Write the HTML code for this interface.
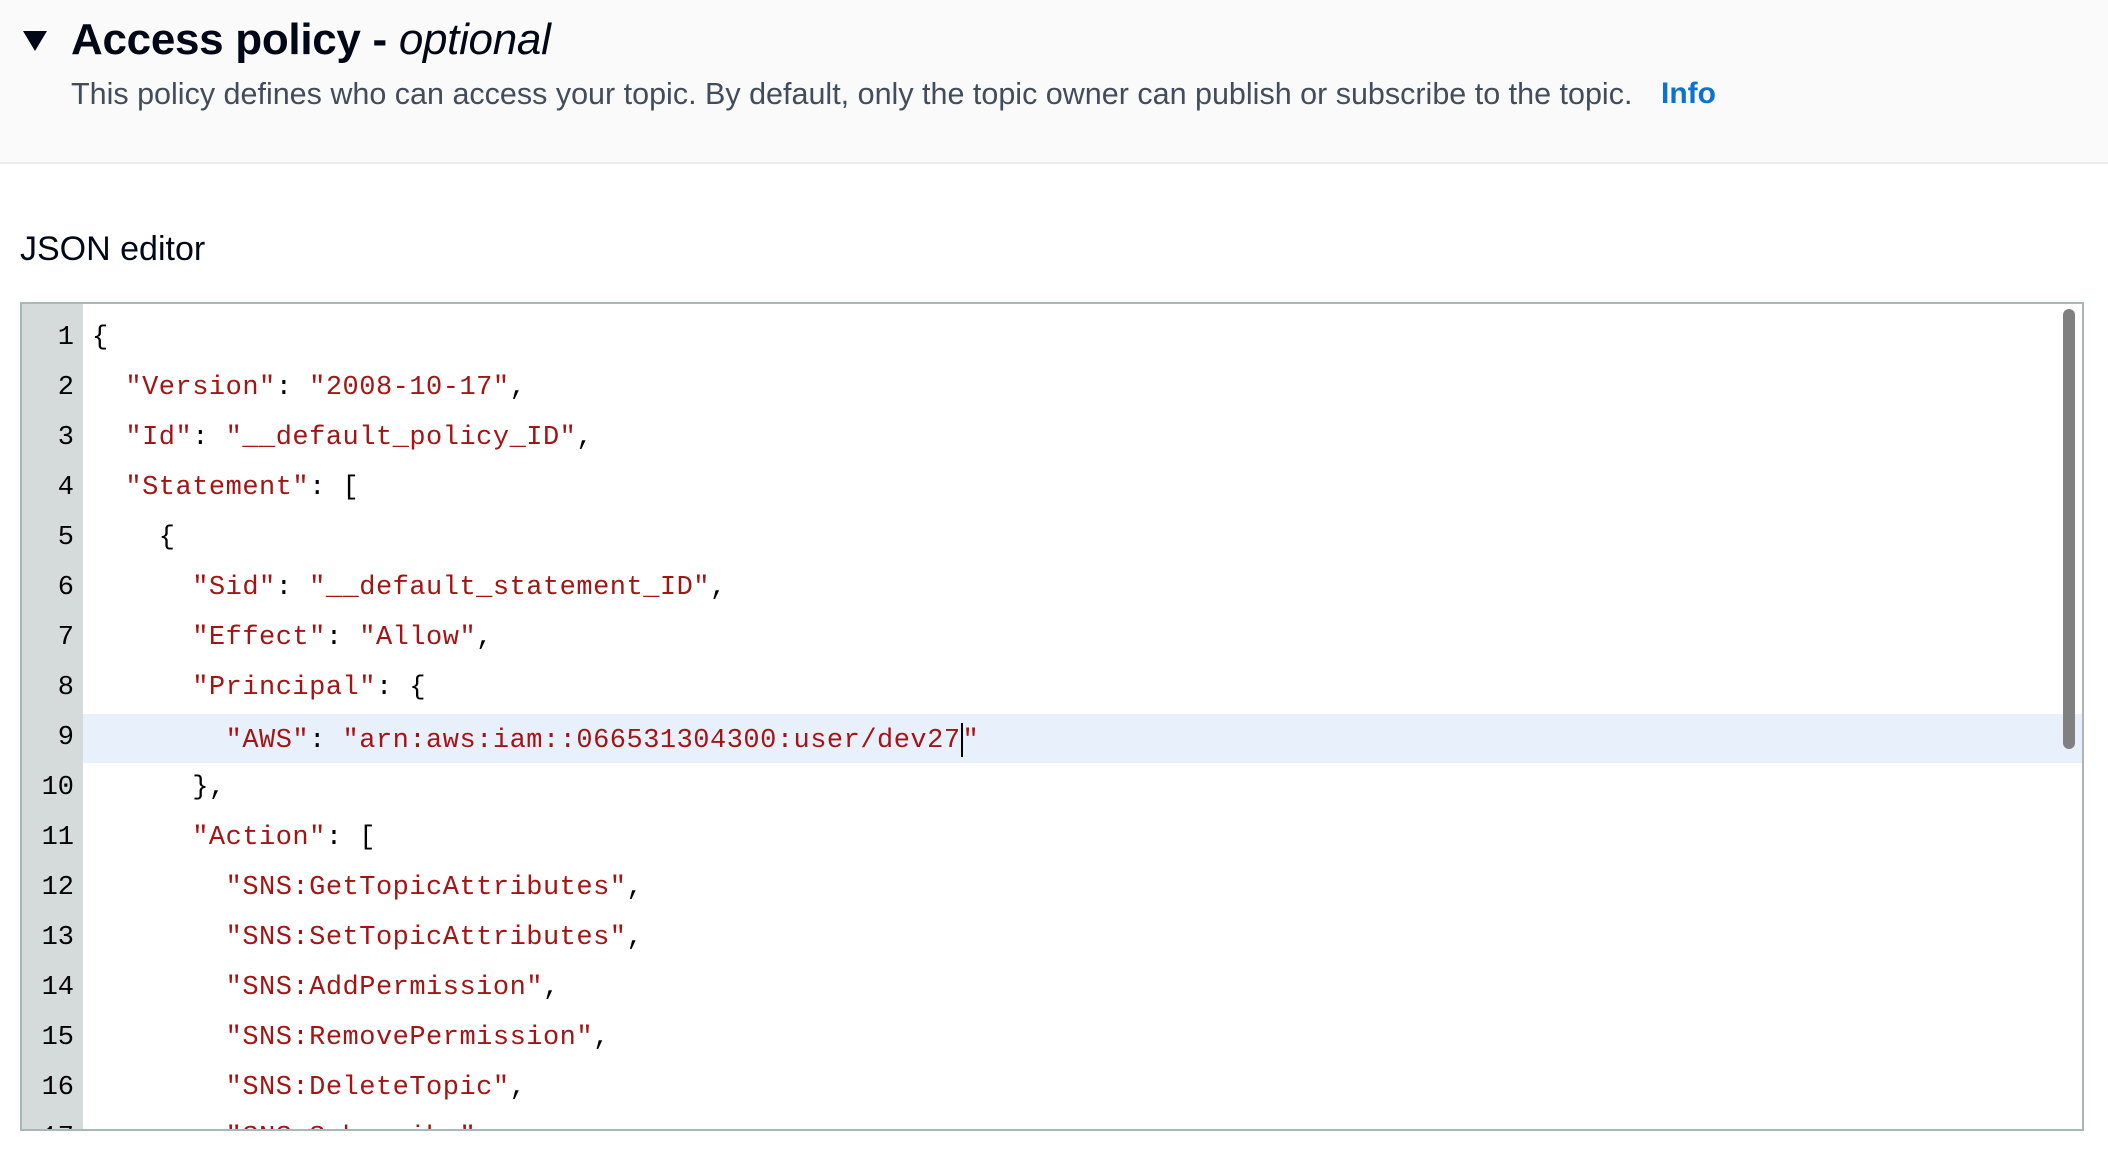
<!DOCTYPE html>
<html><head><meta charset="utf-8"><style>
body{margin:0;width:2108px;height:1168px;background:#fff;position:relative;overflow:hidden;font-family:"Liberation Sans",sans-serif}
.hdr{position:absolute;left:0;top:0;width:2108px;height:162px;background:#fafafa;border-bottom:2px solid #e9ebed}
.tri{position:absolute;left:23px;top:31px;width:0;height:0;border-left:12px solid transparent;border-right:12px solid transparent;border-top:20px solid #000716}
.title{position:absolute;left:71px;top:15px;font-size:44px;font-weight:bold;color:#000716;white-space:nowrap;letter-spacing:-0.3px}
.title i{font-weight:normal}
.desc{position:absolute;left:71px;top:77px;font-size:30.5px;color:#414d5c;white-space:nowrap}
.info{position:absolute;left:1661px;top:77px;font-size:30px;color:#0972d3;font-weight:bold}
.lbl{position:absolute;left:20px;top:230px;font-size:34px;color:#000716}
.ed{position:absolute;left:20px;top:302px;width:2060px;height:825px;border:2px solid #aab7b8;overflow:hidden;background:#fff}
.gut{position:absolute;left:0;top:0;width:61px;height:100%;background:#d5dbdb}
.hl{position:absolute;left:61px;top:410px;width:2000px;height:49px;background:#e8f0fc}
.sb{position:absolute;left:2041px;top:5px;width:12px;height:440px;background:#808080;border-radius:6px}
.ln{position:absolute;left:0;width:52px;text-align:right;font-family:"Liberation Mono",monospace;font-size:27px;color:#000;margin-top:4px}
.cd{position:absolute;left:70px;font-family:"Liberation Mono",monospace;font-size:27px;color:#000;white-space:pre;letter-spacing:0.5px;margin-top:4px}
.s{color:#a31515}
.cur{display:inline-block;width:2px;height:34px;background:#000;vertical-align:middle}
</style></head><body>
<div class="hdr"></div>
<div class="tri"></div>
<div class="title">Access policy - <i>optional</i></div>
<div class="desc">This policy defines who can access your topic. By default, only the topic owner can publish or subscribe to the topic.</div>
<div class="info">Info</div>
<div class="lbl">JSON editor</div>
<div class="ed">
<div class="gut"></div>
<div class="hl"></div>
<div class="sb"></div>
<div class="ln" style="top:15px">1</div><div class="cd" style="top:15px">{</div>
<div class="ln" style="top:65px">2</div><div class="cd" style="top:65px">  <span class="s">"Version"</span>: <span class="s">"2008-10-17"</span>,</div>
<div class="ln" style="top:115px">3</div><div class="cd" style="top:115px">  <span class="s">"Id"</span>: <span class="s">"__default_policy_ID"</span>,</div>
<div class="ln" style="top:165px">4</div><div class="cd" style="top:165px">  <span class="s">"Statement"</span>: [</div>
<div class="ln" style="top:215px">5</div><div class="cd" style="top:215px">    {</div>
<div class="ln" style="top:265px">6</div><div class="cd" style="top:265px">      <span class="s">"Sid"</span>: <span class="s">"__default_statement_ID"</span>,</div>
<div class="ln" style="top:315px">7</div><div class="cd" style="top:315px">      <span class="s">"Effect"</span>: <span class="s">"Allow"</span>,</div>
<div class="ln" style="top:365px">8</div><div class="cd" style="top:365px">      <span class="s">"Principal"</span>: {</div>
<div class="ln" style="top:415px">9</div><div class="cd" style="top:415px">        <span class="s">"AWS"</span>: <span class="s">"arn:aws:iam::066531304300:user/dev27<span class="cur"></span>"</span></div>
<div class="ln" style="top:465px">10</div><div class="cd" style="top:465px">      },</div>
<div class="ln" style="top:515px">11</div><div class="cd" style="top:515px">      <span class="s">"Action"</span>: [</div>
<div class="ln" style="top:565px">12</div><div class="cd" style="top:565px">        <span class="s">"SNS:GetTopicAttributes"</span>,</div>
<div class="ln" style="top:615px">13</div><div class="cd" style="top:615px">        <span class="s">"SNS:SetTopicAttributes"</span>,</div>
<div class="ln" style="top:665px">14</div><div class="cd" style="top:665px">        <span class="s">"SNS:AddPermission"</span>,</div>
<div class="ln" style="top:715px">15</div><div class="cd" style="top:715px">        <span class="s">"SNS:RemovePermission"</span>,</div>
<div class="ln" style="top:765px">16</div><div class="cd" style="top:765px">        <span class="s">"SNS:DeleteTopic"</span>,</div>
<div class="ln" style="top:815px">17</div><div class="cd" style="top:815px">        <span class="s">"SNS:Subscribe"</span>,</div>
</div>
</body></html>
